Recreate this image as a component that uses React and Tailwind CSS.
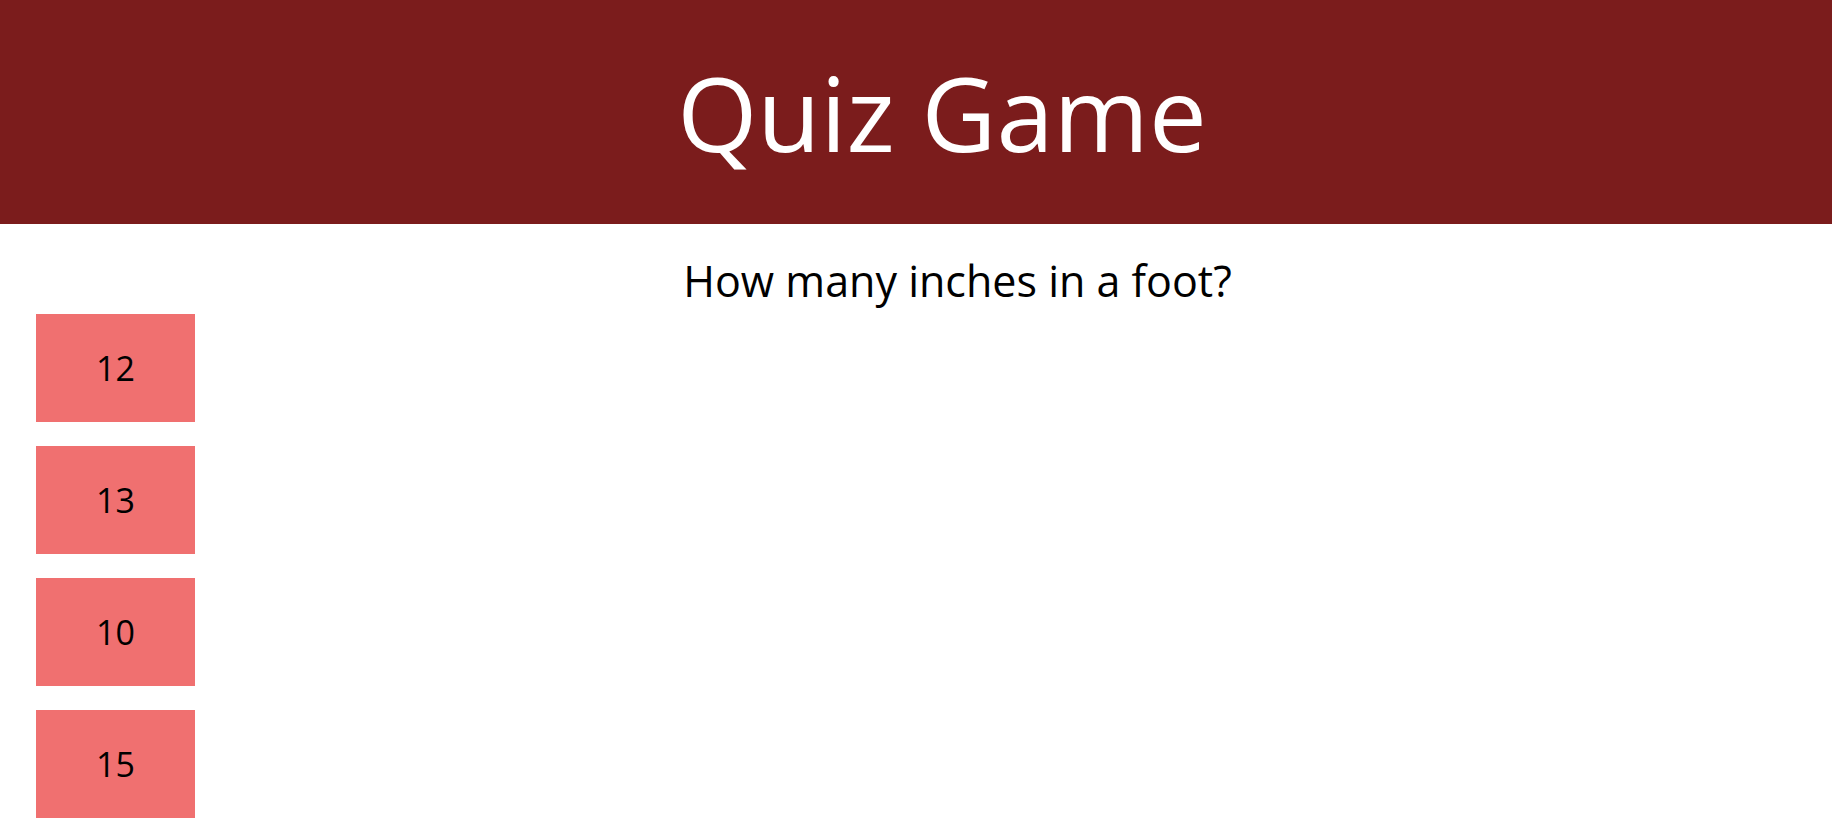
export default function App() {
  const answers = ['12', '13', '10', '15'];

  return (
    <div className="min-h-screen bg-white font-['Open_Sans',sans-serif] text-black">
      <header className="flex h-[224px] items-center justify-center bg-[#7b1c1c] pl-[52px]">
        <h1 className="text-[103px] leading-none font-normal text-white">Quiz Game</h1>
      </header>

      <main>
        <p className="mt-[24px] pl-[83px] text-center text-[43px] leading-[66px]">How many inches in a foot?</p>

        <div className="flex flex-col gap-[24px] pl-[36px]">
          {answers.map((a) => (
            <button
              key={a}
              className="flex h-[108px] w-[159px] items-center justify-center bg-[#f07070] text-[34px] text-black"
            >
              {a}
            </button>
          ))}
        </div>
      </main>
    </div>
  );
}
